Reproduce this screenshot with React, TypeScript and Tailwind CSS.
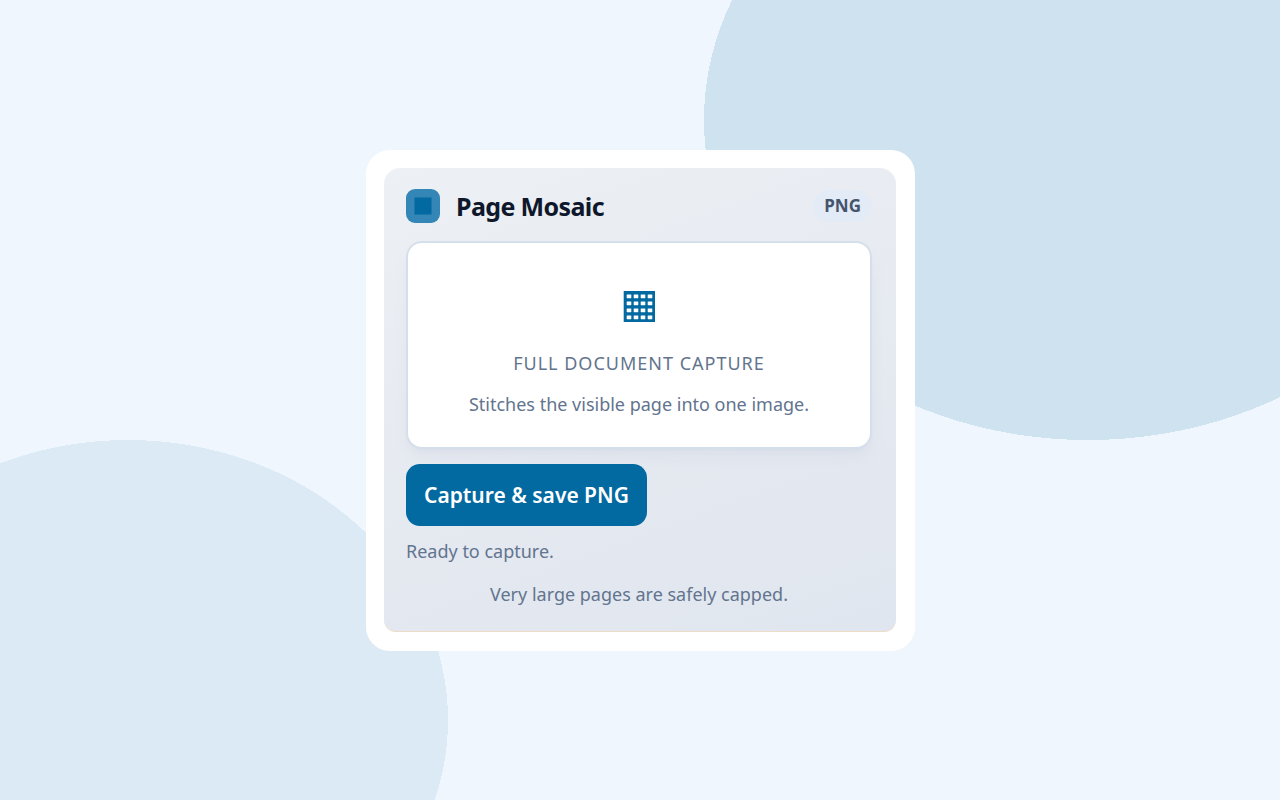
function Backdrop()
{
    return (
        <svg
            className="absolute inset-0 -z-10 h-full w-full"
            aria-hidden="true"
            shapeRendering="crispEdges"
        >
            <ellipse cx="85%" cy="15%" rx="30%" ry="40%" fill="#cfe2f0" />
            <ellipse cx="10%" cy="90%" rx="25%" ry="35%" fill="#dceaf5" />
        </svg>
    );
}

function Logo()
{
    return (
        <svg width="34" height="34" viewBox="0 0 34 34" aria-hidden="true">
            <rect width="34" height="34" rx="9" fill="#3386b6" />
            <rect x="8.5" y="8.5" width="17" height="17" fill="#0369a1" />
        </svg>
    );
}

const holes = [ 0, 1, 2, 3 ];

function GridIcon()
{
    return (
        <svg width="32" height="32" viewBox="0 0 32 32" aria-hidden="true">
            <rect x="0.7" width="31.3" height="31" fill="#0369a1" />
            {holes.map((row) =>
                holes.map((col) => (
                    <rect
                        key={`${row}-${col}`}
                        x={3.7 + col * 7}
                        y={3.4 + row * 7}
                        width="4.6"
                        height="3.8"
                        rx="0.4"
                        fill="#ffffff"
                    />
                ))
            )}
        </svg>
    );
}

export default function App()
{
    return (
        <div className="relative isolate flex min-h-screen items-center justify-center overflow-hidden bg-[#eff6fd] pt-px pl-px font-['Noto_Sans',sans-serif] text-slate-500">
            <Backdrop />
            <main className="w-full max-w-[549px] rounded-3xl bg-white p-[18px] pr-[19px] pb-[19px]">
                <div className="rounded-t-2xl rounded-b-xl border-b border-[#ecdcc8] bg-linear-160 from-[#edf0f4] via-[#e6eaf1] to-[#e0e6ef] pt-5 pr-6 pb-[23px] pl-[22px]">
                    <header className="flex items-center gap-4">
                        <Logo />
                        <h1 className="grow text-[25px] leading-9 font-bold tracking-tight text-slate-900">
                            Page Mosaic
                        </h1>
                        <span className="rounded-full bg-[#e3ebf6] px-[11px] py-1 text-[17px] leading-6 font-bold text-slate-600">
                            PNG
                        </span>
                    </header>
                    <section className="mt-[17px] flex flex-col items-center rounded-2xl border-2 border-[#d5dfeb] bg-white px-4 pt-12 pb-[29px] text-center shadow-lg shadow-slate-400/10">
                        <GridIcon />
                        <h2 className="mt-[26px] text-lg leading-7 tracking-[1px]">
                            FULL DOCUMENT CAPTURE
                        </h2>
                        <p className="mt-[13px] text-lg leading-7">
                            Stitches the visible page into one image.
                        </p>
                    </section>
                    <button
                        type="button"
                        className="mt-[15px] rounded-[14px] bg-[#0369a1] px-[18px] py-[17px] text-[21px] leading-7 font-semibold text-white"
                    >
                        Capture &amp; save PNG
                    </button>
                    <p className="mt-[11px] text-lg leading-7">
                        Ready to capture.
                    </p>
                    <p className="mt-[15px] text-center text-lg leading-7">
                        Very large pages are safely capped.
                    </p>
                </div>
            </main>
        </div>
    );
}
